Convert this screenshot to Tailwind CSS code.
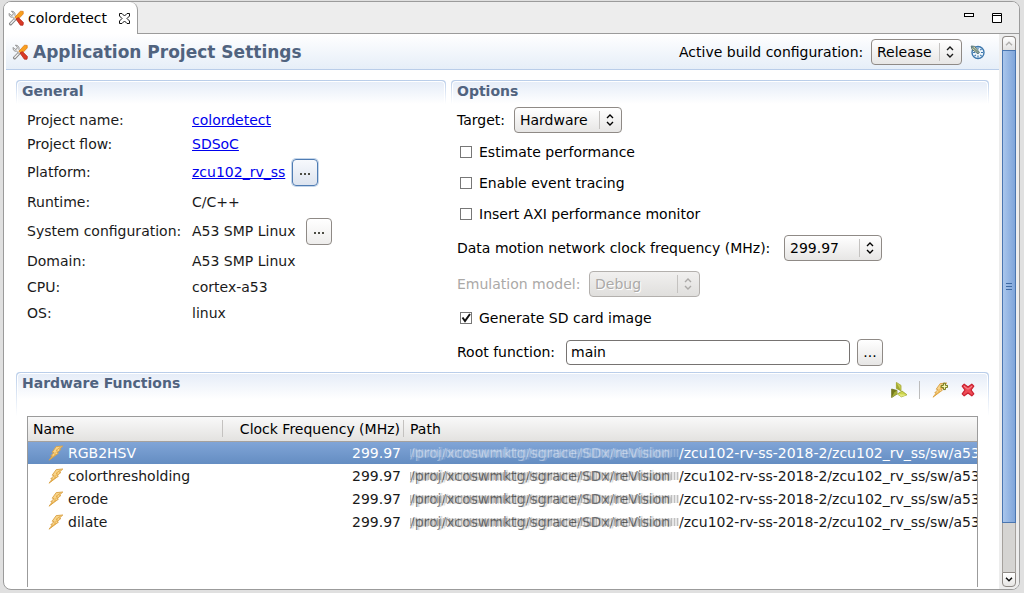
<!DOCTYPE html>
<html lang="en">
<head>
<meta charset="utf-8">
<title>colordetect</title>
<script src="https://cdn.jsdelivr.net/npm/@tailwindcss/browser@4"></script>
</head>
<body class="h-screen overflow-hidden bg-[#e0e0e0] pt-px pr-1 pb-[3px] pl-[3px] font-['DejaVu_Sans',sans-serif] text-[14px] leading-5 text-[#1a1a1a]">
<svg class="hidden" aria-hidden="true">
  <symbol id="tools" viewBox="0 0 16 16">
    <path d="M8.2 8 2.6 13.8" stroke="#858585" stroke-width="3.2" stroke-linecap="round"/>
    <path d="M7.6 8.6 2.8 13.6" stroke="#f0f0f0" stroke-width="1.4" stroke-linecap="round"/>
    <path d="M3.4 1.2 5.4 3.2 4.8 4.9 3.2 5.4 1.2 3.4C.6 5.8 2.2 7.6 4.6 7.2L8 10.4 9.6 8.6 7 5.4C7.6 3 5.8 1 3.4 1.2Z" fill="#eee" stroke="#8a8a8a" stroke-width=".9"/>
    <path d="M6.8 7.4 12.4 1.2 15.2 1.4 15.2 4 9.8 9.6Z" fill="#f9a01f" stroke="#e07b12" stroke-width=".8"/>
    <path d="M8 9 10.4 7.6 15.4 12.6 15 15.2 12.4 15.2Z" fill="#d93a26" stroke="#b8281c" stroke-width=".8"/>
  </symbol>
  <symbol id="bolt" viewBox="0 0 16 16">
    <path d="M8.2 1.6 14.8 1 11.4 4.2 12.8 4.6 9 7.6 10.4 8.2 6 11.4 1 15.2 4.4 10.8 2.8 10.8 6 7.6 4.2 7.2Z" fill="#f7d48c" stroke="#d9a044" stroke-width=".9"/>
    <path d="M12.6 2 8 5.4 9.6 6 6.4 9 7.6 9.4 3 13.4" fill="none" stroke="#e3a63a" stroke-width=".8"/>
  </symbol>
  <symbol id="updown" viewBox="0 0 8 14">
    <path d="M1 5 4 2 7 5M1 9 4 12 7 9" fill="none" stroke="currentColor" stroke-width="1.4"/>
  </symbol>
</svg>

<div class="flex h-full flex-col overflow-hidden rounded-lg border border-[#9b9b9b] bg-white">
  <header class="flex h-8 shrink-0 bg-[#ededed]">
    <div class="flex w-[134px] items-center rounded-tr-lg border-r border-[#9b9b9b] bg-white pl-1 text-black">
      <svg class="size-4"><use href="#tools"/></svg>
      <span class="ml-1 w-[84px]">colordetect</span>
      <button aria-label="Close tab" class="ml-[7px]">
        <svg class="size-[11px]" viewBox="0 0 11 11"><path d="M.5.5H3L5.5 3 8 .5H10.5V3L8 5.5 10.5 8V10.5H8L5.5 8 3 10.5H.5V8L3 5.5.5 3Z" fill="#fff" stroke="#111"/></svg>
      </button>
    </div>
    <div class="flex flex-1 items-start justify-end gap-[18px] border-b border-[#9b9b9b] pt-[11px] pr-[17px]">
      <button aria-label="Minimize" class="block h-1 w-[10px] border border-black bg-white"></button>
      <button aria-label="Maximize" class="block h-[10px] w-[10px]"><svg class="size-[10px]" viewBox="0 0 10 10"><path d="M.5.5H9.5V9.5H.5ZM1 2.5H9" fill="#fff" stroke="#000"/></svg></button>
    </div>
  </header>

  <div class="flex min-h-0 flex-1 pl-[2px]">
    <main class="flex min-w-0 flex-1 flex-col">
      <div class="flex h-[36px] shrink-0 items-center border-b border-[#b9cde9] bg-linear-to-b from-white to-[#e6eef8] pr-[13px] pl-[6px]">
        <svg class="size-4"><use href="#tools"/></svg>
        <h1 class="ml-[5px] text-[17px] font-bold text-[#50637f]">Application Project Settings</h1>
        <label for="config" class="ml-auto w-[192px] text-black">Active build configuration:</label>
        <span class="relative flex h-[26px] w-[91px]">
          <select id="config" class="w-full appearance-none rounded-[4px] border border-[#8f8a86] bg-linear-to-b from-white to-[#e7e6e5] pl-[5px] text-black"><option>Release</option></select>
          <span class="pointer-events-none absolute inset-y-1 right-2 flex items-center border-l border-[#c4c2c0] pl-[6px]"><svg class="h-[14px] w-2"><use href="#updown"/></svg></span>
        </span>
        <button aria-label="Configuration settings" class="ml-2">
          <svg class="size-4" viewBox="0 0 16 16"><circle cx="8" cy="8.5" r="6" fill="#edf4fa" stroke="#3d78ae" stroke-width="1.4"/><path d="M8 3.5v2M8 11.5v2M3 8.5h2M11 8.5h2M11.5 5l-1.2 1.2M4.6 12l1.2-1.2M11.5 12l-1.2-1.2" stroke="#3d78ae" stroke-width="1.2"/><path d="M1.2 2 4.6 2.4 9.4 8.4 8 9.8 2 5.4Z" fill="#d9d8a0" stroke="#4d6c72" stroke-width=".9"/><path d="M2 2.6 8.8 9.2" stroke="#315e86" stroke-width="1"/></svg>
        </button>
      </div>

      <div class="mt-[10px] flex min-h-0 flex-1 flex-col pr-[10px] pl-[10px]">
        <div class="flex shrink-0 gap-[5px]">
          <section class="h-[292px] w-[430px] shrink-0">
            <div class="rounded-t bg-linear-to-b from-[#b9cde9] to-white p-px pb-0">
              <h2 class="h-[23px] rounded-t border border-b-0 border-white bg-linear-to-b from-[#e6edf8] to-white pl-1 leading-[18px] font-bold text-[#50637f]">General</h2>
            </div>
            <dl class="pt-1 pl-[11px]">
              <div class="flex h-6 items-center"><dt class="w-[165px]">Project name:</dt><dd><a href="#" class="text-[#0000ee] underline">colordetect</a></dd></div>
              <div class="flex h-6 items-center"><dt class="w-[165px]">Project flow:</dt><dd><a href="#" class="text-[#0000ee] underline">SDSoC</a></dd></div>
              <div class="flex h-8 items-center"><dt class="w-[165px]">Platform:</dt><dd class="flex items-center gap-[7px]"><a href="#" class="text-[#0000ee] underline">zcu102_rv_ss</a><button aria-label="Browse platform" class="flex h-[27px] w-[26px] items-center justify-center gap-[2px] rounded-[4px] border border-[#4f7cb3] bg-linear-to-b from-[#f7f9fd] to-[#dde4ef] pt-[3px] shadow-[0_0_0_1px_#c5d6ea]"><i class="size-[2px] bg-[#4c4c44]"></i><i class="size-[2px] bg-[#4c4c44]"></i><i class="size-[2px] bg-[#4c4c44]"></i></button></dd></div>
              <div class="flex h-7 items-center"><dt class="w-[165px]">Runtime:</dt><dd>C/C++</dd></div>
              <div class="flex h-[30px] items-center"><dt class="w-[165px]">System configuration:</dt><dd class="flex items-center gap-[11px]">A53 SMP Linux<button aria-label="Browse system configuration" class="flex h-[27px] w-[26px] items-center justify-center gap-[2px] rounded-[4px] border border-[#8f8a86] bg-linear-to-b from-white to-[#eeedec] pt-[3px]"><i class="size-[2px] bg-[#4c4c44]"></i><i class="size-[2px] bg-[#4c4c44]"></i><i class="size-[2px] bg-[#4c4c44]"></i></button></dd></div>
              <div class="flex h-[29px] items-center"><dt class="w-[165px]">Domain:</dt><dd>A53 SMP Linux</dd></div>
              <div class="flex h-6 items-center"><dt class="w-[165px]">CPU:</dt><dd>cortex-a53</dd></div>
              <div class="flex h-7 items-center"><dt class="w-[165px]">OS:</dt><dd>linux</dd></div>
            </dl>
          </section>

          <section class="min-w-0 flex-1 text-black">
            <div class="rounded-t bg-linear-to-b from-[#b9cde9] to-white p-px pb-0">
              <h2 class="h-[23px] rounded-t border border-b-0 border-white bg-linear-to-b from-[#e6edf8] to-white pl-1 leading-[18px] font-bold text-[#50637f]">Options</h2>
            </div>
            <div class="pl-[6px]">
              <div class="flex h-[31px] items-center">
                <label for="target" class="w-[57px]">Target:</label>
                <span class="relative flex h-[26px] w-[108px]">
                  <select id="target" class="w-full appearance-none rounded-[4px] border border-[#8f8a86] bg-linear-to-b from-white to-[#e7e6e5] pl-[5px]"><option>Hardware</option></select>
                  <span class="pointer-events-none absolute inset-y-1 right-2 flex items-center border-l border-[#c4c2c0] pl-[6px]"><svg class="h-[14px] w-2"><use href="#updown"/></svg></span>
                </span>
              </div>
              <label class="flex h-[33px] items-center gap-[7px] pl-[3px]"><input type="checkbox" class="size-[12px] appearance-none border border-[#777] bg-white">Estimate performance</label>
              <label class="flex h-[30px] items-center gap-[7px] pl-[3px]"><input type="checkbox" class="size-[12px] appearance-none border border-[#777] bg-white">Enable event tracing</label>
              <label class="flex h-8 items-center gap-[7px] pl-[3px]"><input type="checkbox" class="size-[12px] appearance-none border border-[#777] bg-white">Insert AXI performance monitor</label>
              <div class="flex h-9 items-center">
                <label for="clock" class="w-[327px]">Data motion network clock frequency (MHz):</label>
                <span class="relative flex h-[26px] w-[98px]">
                  <select id="clock" class="w-full appearance-none rounded-[4px] border border-[#8f8a86] bg-linear-to-b from-white to-[#e7e6e5] pl-[5px]"><option>299.97</option></select>
                  <span class="pointer-events-none absolute inset-y-1 right-2 flex items-center border-l border-[#c4c2c0] pl-[6px]"><svg class="h-[14px] w-2"><use href="#updown"/></svg></span>
                </span>
              </div>
              <div class="flex h-9 items-center text-[#aba9a7]">
                <label for="emulation" class="w-[132px]">Emulation model:</label>
                <span class="relative flex h-[26px] w-[111px]">
                  <select id="emulation" disabled class="w-full appearance-none rounded-[4px] border border-[#b3b0ad] bg-linear-to-b from-[#f1f0ef] to-[#e0dfdd] pl-[5px] text-[#aba9a7] opacity-100 text-shadow-[1px_1px_0_#fff]"><option>Debug</option></select>
                  <span class="pointer-events-none absolute inset-y-1 right-2 flex items-center border-l border-[#c4c2c0] pl-[6px]"><svg class="h-[14px] w-2"><use href="#updown"/></svg></span>
                </span>
              </div>
              <label class="flex h-8 items-center gap-[7px] pl-[3px]">
                <span class="relative flex"><input type="checkbox" checked class="size-[12px] appearance-none border border-[#777] bg-white"><svg class="pointer-events-none absolute inset-0 size-[12px]" viewBox="0 0 12 12"><path d="M2.5 5.5 5 9 10 2" fill="none" stroke="#111" stroke-width="2"/></svg></span>
                Generate SD card image
              </label>
              <div class="flex h-9 items-center">
                <label for="root" class="w-[109px]">Root function:</label>
                <input id="root" type="text" value="main" class="h-[25px] w-[284px] rounded-[4px] border border-[#767371] bg-white pl-1">
                <button aria-label="Browse root function" class="ml-[7px] flex h-[27px] w-[26px] items-end justify-center rounded-[4px] border border-[#8f8a86] bg-linear-to-b from-white to-[#e7e6e5] pb-[3px]">...</button>
              </div>
            </div>
          </section>
        </div>

        <section class="flex min-h-0 flex-1 flex-col">
          <div class="shrink-0 rounded-t bg-linear-to-b from-[#b9cde9] to-white p-px pb-0">
            <div class="flex h-[43px] items-start rounded-t border border-b-0 border-white bg-linear-to-b from-[#e6edf8] to-white to-60% pr-[11px] pl-1">
              <h2 class="leading-[18px] font-bold text-[#50637f]">Hardware Functions</h2>
              <div class="ml-auto flex items-center pt-[7px]">
                <button aria-label="Data motion network">
                  <svg class="size-4" viewBox="0 0 16 16"><path d="M5.4.4 10 3.4V8.8L5.4 6.4Z" fill="#c9cf55" stroke="#a3a530" stroke-width=".8"/><path d="M5.4.4V6.4L10 8.8Z" fill="#a1a932"/><path d="M.6 7 6 8.4V12L.6 15.6Z" fill="#747a1c" stroke="#686e18" stroke-width=".7"/><path d="M6 8.6V12L.6 15.6 3.2 10.6Z" fill="#a4ad3a"/><path d="M6.4 12 11 9 16 12.8 10.4 14.8Z" fill="#cbd44c" stroke="#98a02a" stroke-width=".8"/><path d="M6.4 12 16 12.8 10.4 14.8Z" fill="#e3e87c"/></svg>
                </button>
                <span class="ml-3 h-[18px] w-px bg-[#bcbcbc]"></span>
                <button aria-label="Add hardware function" class="ml-3">
                  <svg class="size-4" viewBox="0 0 16 16"><use href="#bolt" width="16" height="16"/><path d="M11.4 1.2H13.4V3.4H15.6V5.4H13.4V7.6H11.4V5.4H9.2V3.4H11.4Z" fill="#fbfbb8" stroke="#6d7415" stroke-width="1"/></svg>
                </button>
                <button aria-label="Remove hardware function" class="ml-3">
                  <svg class="size-4" viewBox="0 0 16 16"><path d="M2.2 4.2 4.2 2.2 8 5 11.8 2.2 13.8 4.2 11 8 13.8 11.8 11.8 13.8 8 11 4.2 13.8 2.2 11.8 5 8Z" fill="#ee4b56" stroke="#c91f2f" stroke-width="1.2" stroke-linejoin="round"/><path d="M4 4.2 8 7.2 12 4.2" fill="none" stroke="#f58b90"/></svg>
                </button>
              </div>
            </div>
          </div>
          <div class="mx-[11px] mb-[2px] min-h-0 flex-1 overflow-hidden border border-b-0 border-[#9b9b9b]">
            <table class="w-full table-fixed whitespace-nowrap">
              <colgroup><col class="w-[195px]"><col class="w-[181px]"><col></colgroup>
              <thead class="bg-linear-to-b from-[#f9f9f9] to-[#e3e2e0] text-black">
                <tr class="h-6 border-b border-[#a5a19d] text-left">
                  <th class="p-0 font-normal"><span class="flex h-[17px] items-center border-r border-[#c4c2c0] pl-[5px]">Name</span></th>
                  <th class="p-0 font-normal"><span class="flex h-[17px] items-center justify-end border-r border-[#c4c2c0] pr-[3px]">Clock Frequency (MHz)</span></th>
                  <th class="p-0 pl-[6px] font-normal">Path</th>
                </tr>
              </thead>
              <tbody>
                <tr class="h-[23px] bg-linear-to-b from-[#82a6d8] to-[#648dc2] text-white">
                  <td class="p-0 pl-5"><span class="flex items-center gap-1"><svg class="size-4"><use href="#bolt"/></svg>RGB2HSV</span></td>
                  <td class="p-0 pr-[3px] text-right">299.97</td>
                  <td class="overflow-hidden p-0 pl-[6px]"><span class="inline-block w-[269px] bg-[repeating-linear-gradient(90deg,#ffffff40_0_1px,#ffffff18_1px_3px)] bg-[length:100%_8px] bg-center bg-no-repeat text-white/40 text-shadow-[2px_0_1px_#ffffff33]">/proj/xcoswmktg/sgrace/SDx/reVision</span>/zcu102-rv-ss-2018-2/zcu102_rv_ss/sw/a53</td>
                </tr>
                <tr class="h-[23px]">
                  <td class="p-0 pl-5"><span class="flex items-center gap-1"><svg class="size-4"><use href="#bolt"/></svg>colorthresholding</span></td>
                  <td class="p-0 pr-[3px] text-right">299.97</td>
                  <td class="overflow-hidden p-0 pl-[6px]"><span class="inline-block w-[269px] bg-[repeating-linear-gradient(90deg,#00000040_0_1px,#00000018_1px_3px)] bg-[length:100%_8px] bg-center bg-no-repeat text-black/50 text-shadow-[2px_0_1px_#00000033]">/proj/xcoswmktg/sgrace/SDx/reVision</span>/zcu102-rv-ss-2018-2/zcu102_rv_ss/sw/a53</td>
                </tr>
                <tr class="h-[23px]">
                  <td class="p-0 pl-5"><span class="flex items-center gap-1"><svg class="size-4"><use href="#bolt"/></svg>erode</span></td>
                  <td class="p-0 pr-[3px] text-right">299.97</td>
                  <td class="overflow-hidden p-0 pl-[6px]"><span class="inline-block w-[269px] bg-[repeating-linear-gradient(90deg,#00000040_0_1px,#00000018_1px_3px)] bg-[length:100%_8px] bg-center bg-no-repeat text-black/50 text-shadow-[2px_0_1px_#00000033]">/proj/xcoswmktg/sgrace/SDx/reVision</span>/zcu102-rv-ss-2018-2/zcu102_rv_ss/sw/a53</td>
                </tr>
                <tr class="h-[23px]">
                  <td class="p-0 pl-5"><span class="flex items-center gap-1"><svg class="size-4"><use href="#bolt"/></svg>dilate</span></td>
                  <td class="p-0 pr-[3px] text-right">299.97</td>
                  <td class="overflow-hidden p-0 pl-[6px]"><span class="inline-block w-[269px] bg-[repeating-linear-gradient(90deg,#00000040_0_1px,#00000018_1px_3px)] bg-[length:100%_8px] bg-center bg-no-repeat text-black/50 text-shadow-[2px_0_1px_#00000033]">/proj/xcoswmktg/sgrace/SDx/reVision</span>/zcu102-rv-ss-2018-2/zcu102_rv_ss/sw/a53</td>
                </tr>
              </tbody>
            </table>
          </div>
        </section>
      </div>
    </main>

    <div class="flex w-5 shrink-0 flex-col bg-[#ededed] pt-[2px] pr-[3px] pb-[2px] pl-[3px]">
      <button aria-label="Scroll up" class="flex h-[14px] shrink-0 items-center justify-center rounded-t border border-b-0 border-[#8f8a86] bg-linear-to-b from-white to-[#e3e2e1]"><svg class="h-[5px] w-2" viewBox="0 0 8 5"><path d="M1 4.3 4 1.3 7 4.3" fill="none" stroke="#b0aeac" stroke-width="1.4"/></svg></button>
      <div class="min-h-0 flex-1 border-x border-[#a5a19d] bg-[#d5d4d2]">
        <div class="-mx-px flex h-[473px] flex-col items-center justify-center gap-[2px] border border-[#4a76b0] bg-linear-to-r from-[#a9c6ec] to-[#7fa5da]">
          <i class="h-px w-[6px] bg-[#3f6aa3]"></i><i class="h-px w-[6px] bg-[#3f6aa3]"></i><i class="h-px w-[6px] bg-[#3f6aa3]"></i>
        </div>
      </div>
      <button aria-label="Scroll down" class="flex h-[15px] shrink-0 items-center justify-center rounded-b border border-[#8f8a86] bg-linear-to-b from-white to-[#e7e6e5]"><svg class="h-[5px] w-2" viewBox="0 0 8 5"><path d="M1 .7 4 3.7 7 .7" fill="none" stroke="#111" stroke-width="1.5"/></svg></button>
    </div>
  </div>
</div>
</body>
</html>
